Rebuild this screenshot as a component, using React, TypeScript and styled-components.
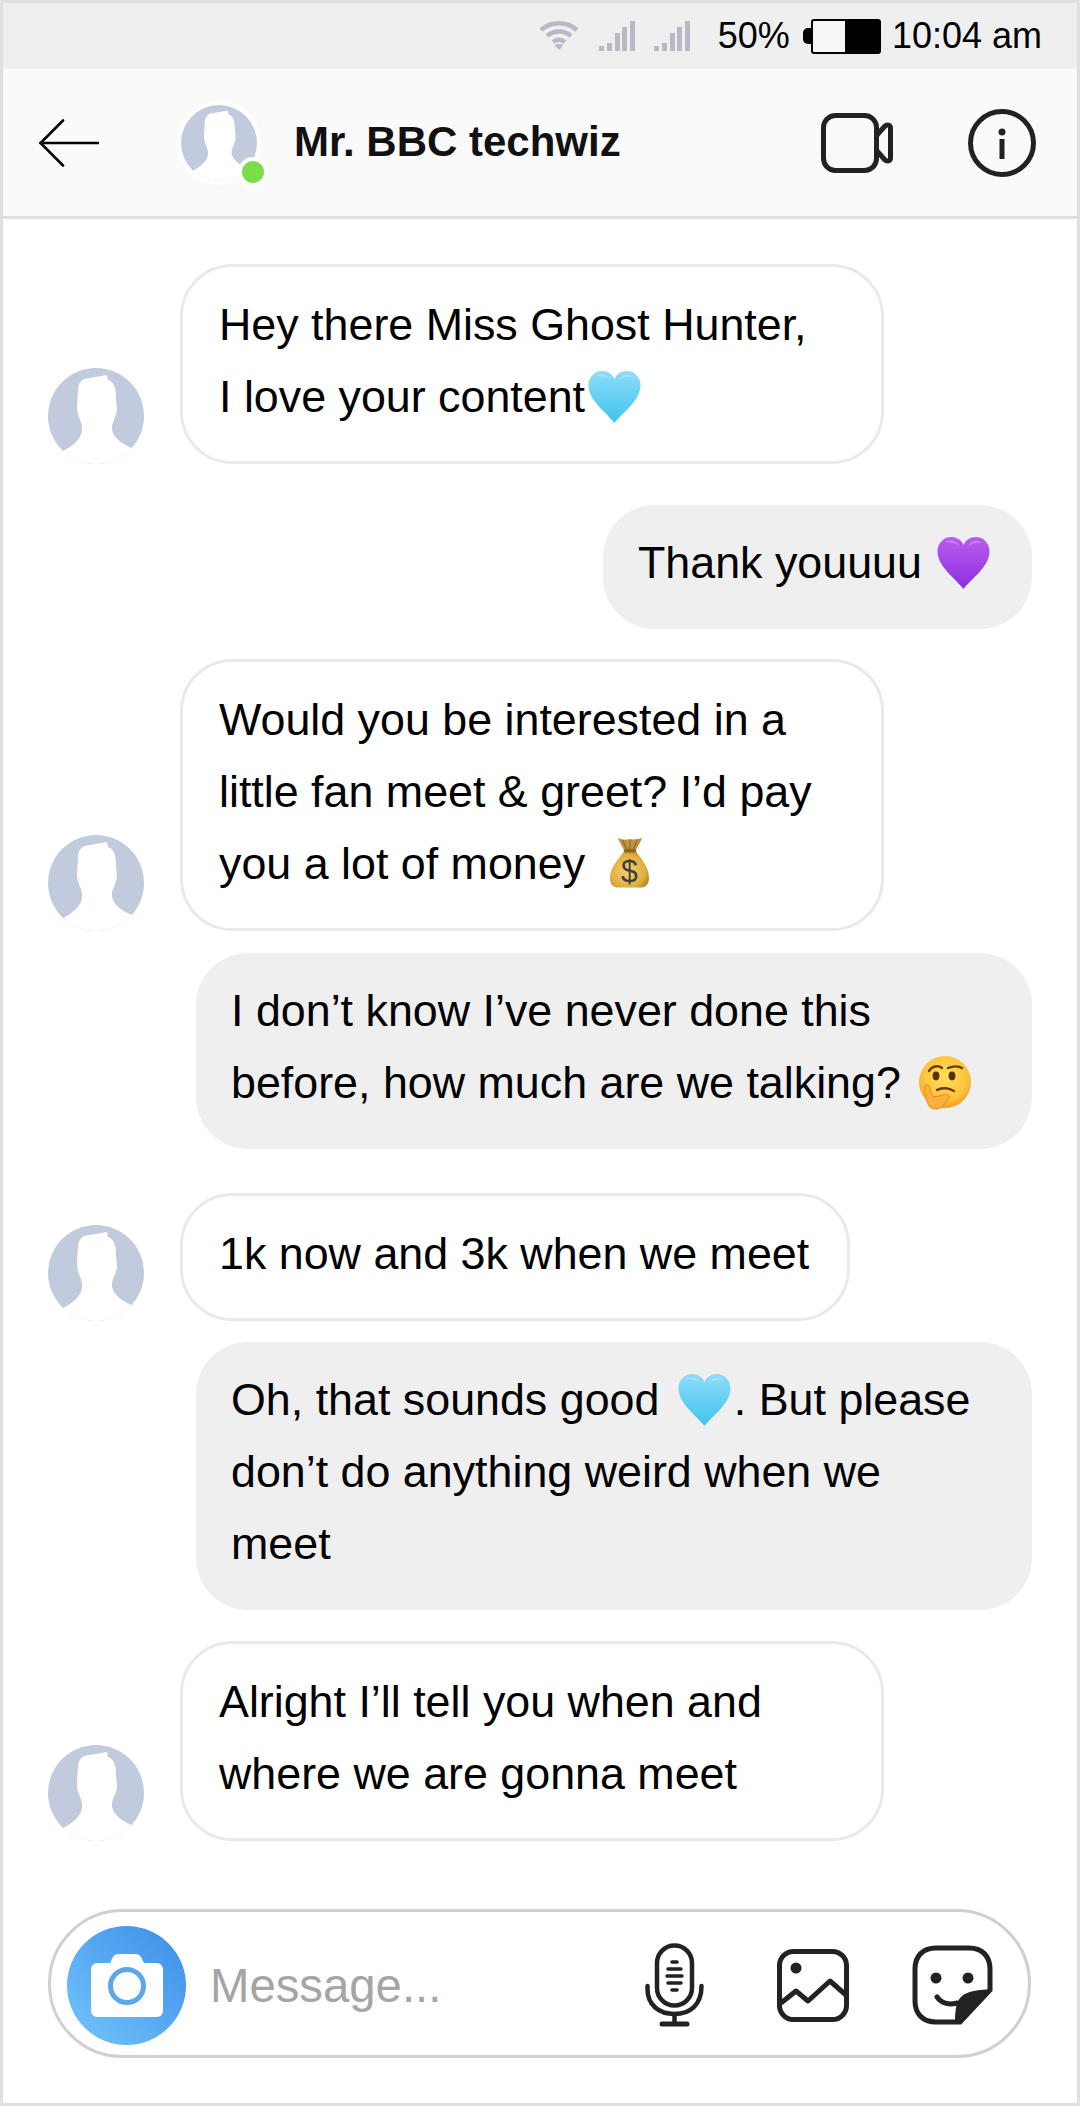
import React from "react";
import styled, { createGlobalStyle } from "styled-components";

const Global = createGlobalStyle`
  html, body { margin: 0; padding: 0; background: #fff; }
  * { box-sizing: border-box; }
`;

const Phone = styled.div`
  width: 1080px;
  height: 2106px;
  border: 3px solid #e0e0e0;
  background: #fff;
  font-family: "Liberation Sans", Arial, sans-serif;
  color: #000;
  overflow: hidden;
  display: flex;
  flex-direction: column;
`;

const StatusBar = styled.div`
  height: 66px;
  flex: none;
  background: #efefef;
  display: flex;
  align-items: center;
  justify-content: flex-end;
  padding: 0 35px 0 0;
  font-size: 36px;
`;
const StatusGlyph = styled.svg<{ $mr: number }>`
  display: block;
  flex: none;
  margin-right: ${(p) => p.$mr}px;
`;
const StatusText = styled.span`
  line-height: 66px;
  white-space: nowrap;
`;
const Battery = styled.div`
  display: flex;
  align-items: center;
  margin: 0 11px 0 13px;
`;
const BatteryNub = styled.div`
  width: 8px;
  height: 16px;
  background: #000;
  border-radius: 5px 0 0 5px;
`;
const BatteryBody = styled.div`
  width: 70px;
  height: 35px;
  border: 2px solid #000;
  border-radius: 3px;
  background: #f6f6f6;
  display: flex;
  justify-content: flex-end;
`;
const BatteryFill = styled.div`
  width: 34px;
  background: #000;
`;

const Header = styled.header`
  height: 150px;
  flex: none;
  background: #fafafa;
  border-bottom: 3px solid #e0e0e0;
  display: flex;
  align-items: center;
  padding: 0 41px 0 36px;
`;
const BackIcon = styled.svg`
  display: block;
  flex: none;
`;
const HeaderAvatarWrap = styled.div`
  position: relative;
  width: 84px;
  height: 84px;
  margin: 0 33px 0 78px;
  flex: none;
  border-radius: 50%;
  background: #fff;
  padding: 4px;
`;
const OnlineDot = styled.span`
  position: absolute;
  right: -7px;
  bottom: -2px;
  width: 30px;
  height: 30px;
  border-radius: 50%;
  background: #7bdd48;
  border: 4px solid #fff;
`;
const Title = styled.div`
  font-weight: 700;
  font-size: 42px;
  color: #111;
  white-space: nowrap;
  padding-bottom: 1px;
`;
const HeaderActions = styled.div`
  margin-left: auto;
  display: flex;
  align-items: center;
  gap: 75px;
`;
const ActionIcon = styled.svg`
  display: block;
  flex: none;
`;

const Thread = styled.main`
  flex: 1;
  display: flex;
  flex-direction: column;
  padding: 45px 45px 0;
`;
const InRow = styled.div<{ $top?: number }>`
  display: flex;
  align-items: flex-end;
  gap: 36px;
  margin-top: ${(p) => p.$top ?? 0}px;
`;
const OutRow = styled.div<{ $top?: number }>`
  display: flex;
  justify-content: flex-end;
  margin-top: ${(p) => p.$top ?? 0}px;
`;
const AvatarSvg = styled.svg`
  display: block;
  flex: none;
`;
const InBubble = styled.div<{ $w: number }>`
  width: ${(p) => p.$w}px;
  border: 3px solid #e9e9e9;
  border-radius: 52px;
  background: #fff;
  padding: 21px 30px 29px 36px;
  font-size: 44.8px;
  line-height: 72px;
  white-space: nowrap;
`;
const OutBubble = styled.div<{ $w: number }>`
  width: ${(p) => p.$w}px;
  border-radius: 52px;
  background: #efefef;
  padding: 21px 30px 31px 35px;
  font-size: 44.8px;
  line-height: 72px;
  white-space: nowrap;
`;
const Emoji = styled.svg<{ $ml?: number; $mr?: number; $shift?: number }>`
  display: inline-block;
  vertical-align: ${(p) => p.$shift ?? -12}px;
  margin-left: ${(p) => p.$ml ?? 0}px;
  margin-right: ${(p) => p.$mr ?? 0}px;
`;

const Composer = styled.footer`
  margin: 0 0 45px 45px;
  width: 983px;
  height: 149px;
  flex: none;
  border: 3px solid #cfd0d6;
  border-radius: 75px;
  display: flex;
  align-items: center;
  padding: 3px 35px 0 16px;
`;
const CameraCircle = styled.div`
  width: 119px;
  height: 119px;
  flex: none;
  border-radius: 50%;
  background: linear-gradient(45deg, #74c6fb 0%, #3c8ce8 100%);
  display: flex;
  align-items: center;
  justify-content: center;
`;
const Placeholder = styled.span`
  font-size: 47.3px;
  color: #a5a5a5;
  margin-left: 24px;
  white-space: nowrap;
`;
const ComposerIcons = styled.div`
  margin-left: auto;
  display: flex;
  align-items: center;
`;
const ComposerIcon = styled.svg<{ $ml: number }>`
  display: block;
  flex: none;
  margin-left: ${(p) => p.$ml}px;
`;

const Silhouette = ({ size, id }: { size: number; id: string }) => (
  <AvatarSvg width={size} height={size} viewBox="0 0 96 96">
    <defs>
      <clipPath id={id}>
        <circle cx="48" cy="48" r="48" />
      </clipPath>
    </defs>
    <g clipPath={`url(#${id})`}>
      <rect width="96" height="96" fill="#c2cade" />
      <path
        d="M36 11 L59 7 L60 12 C66 14 68 20 68 30 L69 42 C68 50 63 55 64 62 C66 70 74 76 84 80 L96 96 L0 96 L15 83 C25 78 34 70 34 62 C35 55 29 48 29 40 L30 22 C30 16 33 13 36 11 Z"
        fill="#fff"
      />
    </g>
  </AvatarSvg>
);

const Heart = ({ w, id, top, bottom, ml, mr, shift }: { w: number; id: string; top: string; bottom: string; ml?: number; mr?: number; shift?: number }) => (
  <Emoji width={w} height={w} viewBox="0 0 53 53" $ml={ml} $mr={mr} $shift={shift}>
    <defs>
      <linearGradient id={id} x1="0" y1="0" x2="0" y2="1">
        <stop offset="0" stopColor={top} />
        <stop offset="1" stopColor={bottom} />
      </linearGradient>
    </defs>
    <path
      d="M26.5 52 C19 42 1 30 0.5 15 C0.3 6 7 0 14 0 C20 0 24.5 3 26.5 8 C28.5 3 33 0 39 0 C46 0 52.7 6 52.5 15 C52 30 34 42 26.5 52 Z"
      fill={`url(#${id})`}
    />
    <path d="M8 5 C13 2 20 4 23 9 C18 6 12 5 8 5 Z M31 9 C34 4 41 2 46 6 C41 5 35 6 31 9 Z" fill="#fff" opacity="0.25" />
  </Emoji>
);

const MoneyBag = () => (
  <Emoji width={39} height={51} viewBox="0 0 40 51" $ml={12} $shift={-9} preserveAspectRatio="none">
    <defs>
      <radialGradient id="bag" cx="0.45" cy="0.55" r="0.65">
        <stop offset="0" stopColor="#f4d272" />
        <stop offset="0.7" stopColor="#dfae3e" />
        <stop offset="1" stopColor="#a87a20" />
      </radialGradient>
    </defs>
    <path d="M8 1 C13 3 16 3 20 2 C25 3 28 2 33 1 C31 6 28 10 26 14 L15 14 C13 10 10 6 8 1 Z" fill="#c0923a" />
    <path d="M13 3 L17 12 M21 3 L20 12 M28 3 L24 12" stroke="#8f6a26" strokeWidth="1.2" fill="none" />
    <path d="M15 14 L26 14 C31 20 40 30 40 41 C40 47 37 50 32 50.5 L8 50.5 C3 50 0 47 0 41 C0 30 10 20 15 14 Z" fill="url(#bag)" />
    <rect x="14" y="12" width="13" height="3.5" rx="1.5" fill="#8c6822" />
    <text x="20" y="45" textAnchor="middle" fontFamily="Liberation Sans, Arial, sans-serif" fontSize="31" fill="#3f3f3f">$</text>
  </Emoji>
);

const Thinking = () => (
  <Emoji width={53} height={54} viewBox="0 0 53 54" $ml={5} $shift={-12}>
    <defs>
      <radialGradient id="face" cx="0.5" cy="0.4" r="0.6">
        <stop offset="0" stopColor="#ffdf5c" />
        <stop offset="0.75" stopColor="#fcc23c" />
        <stop offset="1" stopColor="#f59a22" />
      </radialGradient>
    </defs>
    <circle cx="27" cy="26" r="26" fill="url(#face)" />
    <path d="M11 15 C14 10 20 9 24 12" stroke="#6b3d0c" strokeWidth="2.4" fill="none" strokeLinecap="round" />
    <path d="M30 12 C35 10 41 10 44 12" stroke="#6b3d0c" strokeWidth="2.4" fill="none" strokeLinecap="round" />
    <ellipse cx="18" cy="20" rx="3.4" ry="4.4" fill="#5a3208" />
    <ellipse cx="34" cy="20" rx="3.4" ry="4.4" fill="#5a3208" />
    <path d="M19 34 C24 31 31 32 36 35" stroke="#6b3d0c" strokeWidth="2.4" fill="none" strokeLinecap="round" />
    <path d="M7 30 C6 36 8 44 11 50 C14 54 21 54 25 50 L31 42 C33 39 29 37 26 39 L15 41 C13 37 12 33 11 30 C10 28 7 28 7 30 Z" fill="#fbb03b" stroke="#e98d1e" strokeWidth="1" />
  </Emoji>
);

const Bars = () => (
  <>
    <rect x="0" y="25" width="5" height="5" />
    <rect x="8" y="22" width="5" height="8" />
    <rect x="16" y="12" width="5" height="18" />
    <rect x="23" y="6" width="5" height="24" />
    <rect x="31" y="0" width="5" height="30" />
  </>
);

export default function App() {
  return (
    <Phone>
      <Global />
      <StatusBar>
        <StatusGlyph width="40" height="30" viewBox="0 0 40 30" $mr={20} fill="none" stroke="#b9b9c6" strokeWidth="4.5">
          <path d="M2 9 C12 0 28 0 38 9" />
          <path d="M8 15 C15 9 25 9 32 15" />
          <path d="M14 21 C18 18 22 18 26 21" />
          <path d="M15.5 24 L20 29 L24.5 24 C22 22.5 18 22.5 15.5 24 Z" fill="#b9b9c6" stroke="none" />
        </StatusGlyph>
        <StatusGlyph width="36" height="30" viewBox="0 0 36 30" $mr={19} fill="#b9b9c6"><Bars /></StatusGlyph>
        <StatusGlyph width="36" height="30" viewBox="0 0 36 30" $mr={28} fill="#b9b9c6"><Bars /></StatusGlyph>
        <StatusText>50%</StatusText>
        <Battery>
          <BatteryNub />
          <BatteryBody><BatteryFill /></BatteryBody>
        </Battery>
        <StatusText>10:04 am</StatusText>
      </StatusBar>

      <Header>
        <BackIcon width="60" height="48" viewBox="0 0 60 48" fill="none" stroke="#000" strokeWidth="2.6" strokeLinecap="round">
          <path d="M24 1.5 L1.5 24 L24 46.5" />
          <path d="M1.5 24 H59" />
        </BackIcon>
        <HeaderAvatarWrap>
          <Silhouette size={76} id="av0" />
          <OnlineDot />
        </HeaderAvatarWrap>
        <Title>Mr. BBC techwiz</Title>
        <HeaderActions>
          <ActionIcon width="72" height="60" viewBox="0 0 72 60" fill="none" stroke="#222" strokeWidth="5">
            <rect x="2.5" y="2.5" width="53" height="55" rx="12" />
            <path d="M56 22 L64 13 C66 11 69.5 12 69.5 15 V45 C69.5 48 66 49 64 47 L56 38" strokeLinejoin="round" />
          </ActionIcon>
          <ActionIcon width="68" height="68" viewBox="0 0 68 68" fill="none" stroke="#222" strokeWidth="5">
            <circle cx="34" cy="34" r="31.5" />
            <circle cx="34" cy="23" r="3.5" fill="#222" stroke="none" />
            <path d="M34 30 V50" strokeWidth="5" />
          </ActionIcon>
        </HeaderActions>
      </Header>

      <Thread>
        <InRow>
          <Silhouette size={96} id="av1" />
          <InBubble $w={704}>
            Hey there Miss Ghost Hunter,<br />
            I love your content<Heart w={53} id="h1" top="#8edcf8" bottom="#3fc4ee" ml={3} />
          </InBubble>
        </InRow>
        <OutRow $top={41}>
          <OutBubble $w={429}>
            Thank youuuu <Heart w={53} id="h2" top="#b95cf0" bottom="#8a2fe0" ml={3} />
          </OutBubble>
        </OutRow>
        <InRow $top={30}>
          <Silhouette size={96} id="av2" />
          <InBubble $w={704}>
            Would you be interested in a<br />
            little fan meet &amp; greet? I’d pay<br />
            you a lot of money <MoneyBag />
          </InBubble>
        </InRow>
        <OutRow $top={22}>
          <OutBubble $w={836}>
            I don’t know I’ve never done this<br />
            before, how much are we talking? <Thinking />
          </OutBubble>
        </OutRow>
        <InRow $top={44}>
          <Silhouette size={96} id="av3" />
          <InBubble $w={670}>1k now and 3k when we meet</InBubble>
        </InRow>
        <OutRow $top={21}>
          <OutBubble $w={836}>
            Oh, that sounds good <Heart w={53} id="h3" top="#8edcf8" bottom="#3fc4ee" ml={6} mr={3} />. But please<br />
            don’t do anything weird when we<br />
            meet
          </OutBubble>
        </OutRow>
        <InRow $top={31}>
          <Silhouette size={96} id="av4" />
          <InBubble $w={704}>
            Alright I’ll tell you when and<br />
            where we are gonna meet
          </InBubble>
        </InRow>
      </Thread>

      <Composer>
        <CameraCircle>
          <svg width="72" height="64" viewBox="0 0 72 64">
            <path d="M6 10 H19 L22 4 C23 2 25 1 28 1 H44 C47 1 49 2 50 4 L53 10 H66 C69 10 72 13 72 16 V58 C72 61 69 64 66 64 H6 C3 64 0 61 0 58 V16 C0 13 3 10 6 10 Z" fill="#fff" />
            <circle cx="36" cy="33" r="16.5" fill="none" stroke="#5aa7ee" strokeWidth="5" />
          </svg>
        </CameraCircle>
        <Placeholder>Message...</Placeholder>
        <ComposerIcons>
          <ComposerIcon $ml={0} width="59" height="84" viewBox="0 0 59 84" fill="none" stroke="#222" strokeWidth="4.5" strokeLinecap="round">
            <rect x="12" y="2.5" width="35" height="60" rx="17.5" />
            <path d="M27 19 H32 M23 26 H36 M22 33 H37 M23 40 H36 M27 47 H32" strokeWidth="3.5" />
            <path d="M2.5 43 V46 C2.5 62 14 71 29.5 71 C45 71 56.5 62 56.5 43 V43" />
            <path d="M29.5 71 V80" />
            <path d="M17 81 H42" strokeWidth="5" />
          </ComposerIcon>
          <ComposerIcon $ml={73} width="72" height="73" viewBox="0 0 72 73" fill="none" stroke="#222" strokeWidth="5">
            <rect x="2.5" y="2.5" width="67" height="68" rx="14" />
            <circle cx="19" cy="19" r="5.5" fill="#222" stroke="none" />
            <path d="M4 54 L19 42 L31 52 L53 32 L69 46" strokeLinejoin="round" />
          </ComposerIcon>
          <ComposerIcon $ml={63} width="81" height="80" viewBox="0 0 81 80" fill="none" stroke="#222" strokeWidth="5">
            <path d="M24 3 H57 C70 3 78 11 78 24 V45 L48 77 H24 C11 77 3 69 3 56 V24 C3 11 11 3 24 3 Z" />
            <path d="M80 44 C66 45 56 46 50 51 C45 55 43 62 43 78 L50 78 Z" fill="#222" stroke="none" />
            <circle cx="24" cy="33" r="5.5" fill="#222" stroke="none" />
            <circle cx="56" cy="33" r="5.5" fill="#222" stroke="none" />
            <path d="M25 52 C30 59 38 60 45 58" strokeLinecap="round" />
          </ComposerIcon>
        </ComposerIcons>
      </Composer>
    </Phone>
  );
}
